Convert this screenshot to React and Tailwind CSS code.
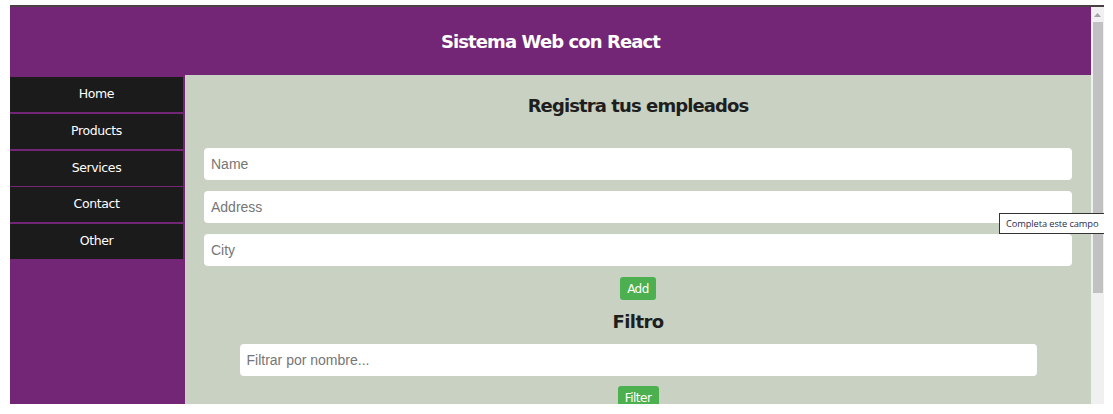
export default function App() {
  const nav = ["Home", "Products", "Services", "Contact", "Other"];
  return (
    <div className="w-[1113px] h-[414px] bg-white pt-[5px] pl-[10px] overflow-hidden">
      <div className="relative w-[1094px] h-[399px] border-t-2 border-[#4a3f45] flex overflow-hidden">
        <div className="w-[1081px] h-full flex flex-col">
          <header className="h-[68px] shrink-0 bg-[#722675] flex items-center justify-center">
            <h1 className="text-white font-bold text-[18px] [font-family:'DejaVu_Sans',sans-serif] tracking-[-0.9px]">
              Sistema Web con React
            </h1>
          </header>
          <div className="flex flex-1 min-h-0">
            <aside className="w-[175px] shrink-0 bg-[#722675] pt-[2px] pr-[2px] flex flex-col gap-[1.75px]">
              {nav.map((n) => (
                <div
                  key={n}
                  className="h-[35px] bg-[#1b1b1b] text-white flex items-center justify-center text-[12.5px] [font-family:'DejaVu_Sans',sans-serif] tracking-[-0.4px]"
                >
                  {n}
                </div>
              ))}
            </aside>
            <main className="flex-1 bg-[#c9d1c2] px-[19px] pt-[19px] overflow-hidden">
              <h2 className="h-[24px] leading-[24px] text-center font-bold text-[18px] text-[#1e1e1e] [font-family:'DejaVu_Sans',sans-serif] tracking-[-0.9px] mb-[30px]">
                Registra tus empleados
              </h2>
              {["Name", "Address", "City"].map((p) => (
                <input
                  key={p}
                  placeholder={p}
                  className="block w-full h-[32px] mb-[11px] bg-white rounded-[4px] px-[7px] text-[14px] [font-family:'Liberation_Sans',Arial,sans-serif] placeholder:text-[#767676] outline-none"
                />
              ))}
              <div className="flex justify-center">
                <button className="w-[36px] h-[23px] bg-[#4caf50] rounded-[3px] text-white text-[12px] [font-family:'DejaVu_Sans',sans-serif] tracking-[-0.5px]">
                  Add
                </button>
              </div>
              <h2 className="mt-[10px] h-[24px] leading-[24px] text-center font-bold text-[18px] text-[#1e1e1e] [font-family:'DejaVu_Sans',sans-serif] tracking-[-0.6px]">
                Filtro
              </h2>
              <input
                placeholder="Filtrar por nombre..."
                className="block mt-[10px] mx-auto w-[797px] h-[32px] bg-white rounded-[4px] px-[7px] text-[14px] [font-family:'Liberation_Sans',Arial,sans-serif] placeholder:text-[#767676] outline-none"
              />
              <div className="flex justify-center mt-[10px]">
                <button className="w-[41px] h-[23px] bg-[#4caf50] rounded-[3px] text-white text-[12px] [font-family:'DejaVu_Sans',sans-serif] tracking-[-0.5px]">
                  Filter
                </button>
              </div>
            </main>
          </div>
        </div>
        <div className="w-[13px] h-full bg-[#f0f0f0] flex flex-col items-center">
          <div className="h-[15px] flex items-center justify-center">
            <svg width="7" height="4" viewBox="0 0 7 4">
              <path d="M0 4 L3.5 0 L7 4 Z" fill="#a3a3a3" />
            </svg>
          </div>
          <div className="w-[10px] h-[271px] bg-[#c1c1c1]" />
        </div>
        <div className="absolute left-[989px] top-[206px] h-[21px] pl-[6px] pr-[12px] bg-white border border-[#333] flex items-center whitespace-nowrap text-[9.3px] tracking-[-0.1px] text-[#2b2b4a] [font-family:'Open_Sans',sans-serif]">
          Completa este campo
        </div>
      </div>
    </div>
  );
}
